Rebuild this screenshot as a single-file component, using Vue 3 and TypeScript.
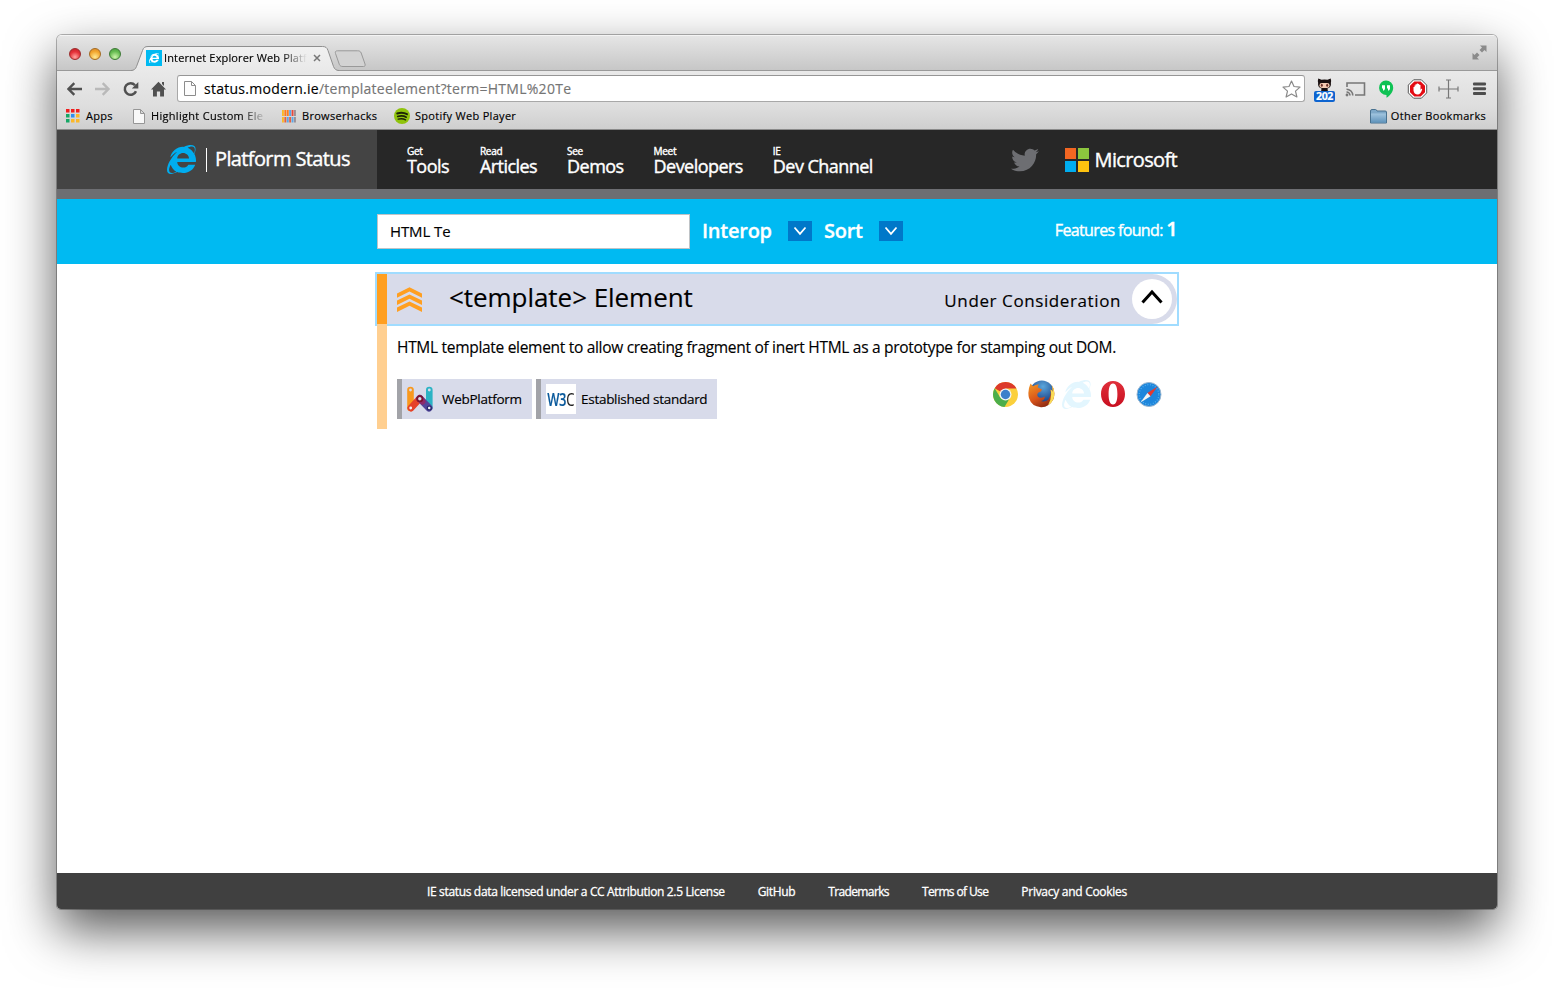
<script setup lang="ts">
import { ref } from 'vue'

interface NavItem {
  lead: string
  label: string
}

const term = ref('HTML Te')

const nav: NavItem[] = [
  { lead: 'Get', label: 'Tools' },
  { lead: 'Read', label: 'Articles' },
  { lead: 'See', label: 'Demos' },
  { lead: 'Meet', label: 'Developers' },
  { lead: 'IE', label: 'Dev Channel' },
]

const footerLinks: string[] = [
  'IE status data licensed under a CC Attribution 2.5 License',
  'GitHub',
  'Trademarks',
  'Terms of Use',
  'Privacy and Cookies',
]

const lights: string[] = ['red', 'amber', 'green']

const appColors: string[] = [
  '#f01d1d', '#f01d1d', '#f01d1d',
  '#16a765', '#2f8df0', '#fbb829',
  '#16a765', '#fbb829', '#fbb829',
]

const hackTop: string[] = ['#fbb829', '#ff7b1c', '#ff7b1c', '#5aa7e8', '#e8483c', '#9a8f96']
const hackBottom: string[] = ['#fbb829', '#e8603c', '#5aa7e8', '#e8603c', '#5aa7e8', '#9a8f96']

const iePath =
  'M483.049 159.706c10.855-24.575 21.424-60.438 21.424-87.871 0-72.722-79.641-98.371-209.673-38.577-107.632-7.181-211.221 73.67-237.098 186.457 30.852-34.862 78.271-82.298 121.977-101.158C125.404 166.85 79.128 228.002 43.992 291.725 23.246 329.651 0 390.94 0 436.747c0 98.575 92.854 86.5 180.251 42.006 31.423 15.43 66.559 15.573 101.695 15.573 97.124 0 184.249-54.294 216.814-146.022H377.927c-52.509 88.593-196.819 52.996-196.819-47.436H509.9c6.407-43.581-1.655-95.715-26.851-141.162zM64.559 346.877c17.711 51.15 53.703 95.871 100.266 123.304-88.741 48.94-173.267 29.096-100.266-123.304zm115.977-108.873c2-55.152 50.276-94.871 103.98-94.871 53.418 0 101.981 39.719 103.981 94.871H180.536zm184.536-187.6c21.425-10.287 48.563-22.003 72.558-22.003 31.422 0 54.274 21.717 54.274 53.722 0 20.003-7.427 49.007-14.569 67.867-26.28-42.292-65.986-81.584-112.263-99.586z'
</script>

<template>
  <div class="desktop">
    <div class="window">
      <!-- Title bar -->
      <div class="titlebar">
        <div class="lights">
          <i v-for="l in lights" :key="l" class="light" :class="l"></i>
        </div>
        <div class="tab">
          <svg class="tab-shape" width="208" height="25" viewBox="0 0 208 25">
            <defs>
              <linearGradient id="tabFill" x1="0" y1="0" x2="0" y2="1">
                <stop offset="0" stop-color="#f1f1f1" />
                <stop offset="1" stop-color="#e9e9e9" />
              </linearGradient>
            </defs>
            <path d="M0 25V24.5C3 24.5 4.500 23 5.500 20.500L11.500 4.500C12.500 1.500 14 .5 17 .5H191.500C194.500 .5 196 1.500 197 4.500L202.500 20.500C203.500 23 205 24.500 208 24.500V25Z" fill="url(#tabFill)" />
            <path d="M0 24.500C3 24.500 4.500 23 5.500 20.500L11.500 4.500C12.500 1.500 14 .5 17 .5H191.500C194.500 .5 196 1.500 197 4.500L202.500 20.500C203.500 23 205 24.500 208 24.500" fill="none" stroke="#8f8f8f" />
          </svg>
          <div class="tab-content">
            <span class="favicon">
              <svg width="10" height="10" viewBox="0 0 512 512"><path :d="iePath" fill="#fff" /></svg>
            </span>
            <span class="tab-title">Internet Explorer Web Platf</span>
            <svg class="tab-close" width="8" height="8" viewBox="0 0 8 8"><path d="M1 1L7 7M7 1L1 7" stroke="#777" stroke-width="1.500" /></svg>
          </div>
        </div>
        <svg class="new-tab" width="34" height="18" viewBox="0 0 34 18">
          <path d="M4.500 .8H24.500C26.500 .8 27.500 1.300 28.200 3L32 14C32.500 15.500 32 16.500 30.500 16.500H10C8 16.500 7 16 6.300 14.300L2.500 3.500C2 1.800 2.500 .8 4.500 .8Z" fill="#d3d3d3" stroke="#999" />
        </svg>
        <svg class="fullscreen" width="15" height="15" viewBox="0 0 15 15" fill="#8b8b8b">
          <path d="M8 .5H14.500V7L12.500 5L10 7.500L7.500 5L10 2.500ZM7 14.500H.5V8L2.500 10L5 7.500L7.500 10L5 12.500Z" />
        </svg>
      </div>

      <!-- Toolbar -->
      <div class="toolbar">
        <div class="nav-buttons">
          <svg width="16" height="16" viewBox="0 0 16 16" fill="none" stroke="#505050" stroke-width="2.400"><path d="M15 8H2M7.300 2.200L1.500 8L7.300 13.800" /></svg>
          <svg width="16" height="16" viewBox="0 0 16 16" fill="none" stroke="#b9b9b9" stroke-width="2.400"><path d="M0 8H13M7.700 2.200L13.500 8L7.700 13.800" /></svg>
          <svg width="16" height="16" viewBox="0 0 16 16"><path d="M13 10.200A5.800 5.800 0 1 1 12 4.200" fill="none" stroke="#505050" stroke-width="2.500" /><path d="M15.300 1V7.500H8.800Z" fill="#505050" /></svg>
          <svg width="16" height="16" viewBox="0 0 16 16" fill="#505050"><path d="M7.500 .8L15 8.600H13V15.500H9.100V10.500H5.900V15.500H2V8.600H0ZM11 1H13V5L11 3Z" /></svg>
        </div>
        <div class="omnibox">
          <svg width="12" height="15" viewBox="0 0 12 15"><path d="M.5 .5H7.500L11.500 4.500V14.500H.5ZM7.500 .5V4.500H11.500" fill="#fdfdfd" stroke="#8c8c8c" /></svg>
          <span class="url"><b>status.modern.ie</b>/templateelement?term=HTML%20Te</span>
          <svg width="19" height="18" viewBox="0 0 19 18"><path d="M9.500 1L12 6.500L18 7.100L13.500 11.100L14.900 17L9.500 13.900L4.100 17L5.500 11.100L1 7.100L7 6.500Z" fill="#fff" stroke="#8a8a8a" stroke-width="1.200" stroke-linejoin="round" /></svg>
        </div>
        <div class="extensions">
          <span class="octocat">
            <svg width="15" height="14" viewBox="0 0 15 14">
              <path d="M1.300 .5L4.500 1.800Q7.500 1.200 10.500 1.800L13.700 .5Q14.500 3 13.900 4.500Q14.500 9.500 10.500 10.500L11 14H4L4.500 10.500Q.5 9.500 1.100 4.500Q.5 3 1.300 .5Z" fill="#191010" />
              <rect x="2.400" y="4.900" width="10.200" height="5" rx="2.400" fill="#f4cbb2" />
              <ellipse cx="4.800" cy="7.300" rx="1" ry="1.500" fill="#6b3026" />
              <ellipse cx="10.200" cy="7.300" rx="1" ry="1.500" fill="#6b3026" />
            </svg>
            <span class="count">202</span>
          </span>
          <svg width="21" height="20" viewBox="0 0 21 20" fill="none" stroke="#777" stroke-width="1.600"><path d="M2 8V4H19.500V16H10" /><path d="M1.500 10.200A6.300 6.300 0 0 1 7.800 16.500M1.500 13A3.500 3.500 0 0 1 5 16.500" /><circle cx="2" cy="16" r=".6" /></svg>
          <svg width="21" height="20" viewBox="0 0 21 20"><path d="M10 1.500A7.200 7.200 0 0 1 17.200 8.700C17.200 13 14 16.500 10.500 18.800V15.900A7.200 7.200 0 1 1 10 1.500Z" fill="#0fc254" /><path d="M6 6.300H9V9.500Q9 11.200 7 11.700V9.400H6ZM11 6.300H14V9.500Q14 11.200 12 11.700V9.400H11Z" fill="#fff" /></svg>
          <svg width="21" height="20" viewBox="0 0 21 20"><path d="M6.600 .8H14.400L19.700 6.100V13.900L14.400 19.200H6.600L1.300 13.900V6.100Z" fill="#fff" stroke="#555" /><path d="M7.300 2.500H13.700L18 6.800V13.200L13.700 17.500H7.300L3 13.200V6.800Z" fill="#e30a12" /><path d="M6.500 8V11.500Q7 15.500 10.800 15.500Q13.500 15.500 15.200 10.500L14.300 9.600L13.500 11V6H12.300V5H11.200V4.500H9.800V5.200H8.500V6.500H7.500V8Z" fill="#fff" /></svg>
          <svg width="21" height="20" viewBox="0 0 21 20" fill="none" stroke="#777" stroke-width="1.200"><path d="M10.500 1V19M1 10H20M8 1H13M8 19H13M1 7.500V12.500M20 7.500V12.500" /></svg>
          <svg width="21" height="20" viewBox="0 0 21 20" fill="#4d4d4d"><rect x="4" y="3.500" width="13" height="3" rx="1" /><rect x="4" y="8.300" width="13" height="3" rx="1" /><rect x="4" y="13.100" width="13" height="3" rx="1" /></svg>
        </div>
      </div>

      <!-- Bookmarks bar -->
      <div class="bookmarks">
        <div class="bookmark apps">
          <svg width="14" height="14" viewBox="0 0 14 14">
            <rect v-for="(c, i) in appColors" :key="i" :x="(i % 3) * 5" :y="Math.floor(i / 3) * 5" width="3.500" height="3.500" :fill="c" />
          </svg>
          <span>Apps</span>
        </div>
        <div class="bookmark highlight">
          <svg width="12" height="15" viewBox="0 0 12 15"><path d="M.5 .5H7.500L11.500 4.500V14.500H.5ZM7.500 .5V4.500H11.500" fill="#f8f8f8" stroke="#969696" /></svg>
          <span class="faded">Highlight Custom Ele</span>
        </div>
        <div class="bookmark hacks">
          <svg width="14" height="13" viewBox="0 0 14 13">
            <rect v-for="(c, i) in hackTop" :key="'t' + i" :x="i * 2.400" y="0" width="1.900" height="6" :fill="c" />
            <rect v-for="(c, i) in hackBottom" :key="'b' + i" :x="i * 2.400" y="7" width="1.900" height="5.500" :fill="c" />
          </svg>
          <span>Browserhacks</span>
        </div>
        <div class="bookmark spotify">
          <svg width="16" height="16" viewBox="0 0 16 16"><circle cx="8" cy="8" r="8" fill="#8fc30c" /><g fill="none" stroke="#1c2406" stroke-linecap="round"><path d="M3.200 5.500Q8.500 3.800 13 6.200" stroke-width="1.900" /><path d="M3.700 8.500Q8.500 7 12.300 9.200" stroke-width="1.600" /><path d="M4.200 11.200Q8.300 10 11.600 11.900" stroke-width="1.300" /></g></svg>
          <span>Spotify Web Player</span>
        </div>
        <div class="bookmark other">
          <svg width="17" height="15" viewBox="0 0 17 15">
            <defs><linearGradient id="folder" x1="0" y1="0" x2="0" y2="1"><stop offset="0" stop-color="#a3c6e0" /><stop offset="1" stop-color="#5f93bb" /></linearGradient></defs>
            <path d="M.5 2Q.5 .5 2 .5H5.500Q6.500 .5 7 2H15Q16.500 2 16.500 3V14H.5Z" fill="#7fa9c9" stroke="#48718f" />
            <path d="M1 4.500H16V13.500H1Z" fill="url(#folder)" />
          </svg>
          <span>Other Bookmarks</span>
        </div>
      </div>

      <!-- Site -->
      <div class="page">
        <header class="site-header">
          <div class="brand">
            <svg width="29" height="29" viewBox="0 0 512 512"><path :d="iePath" fill="#00adef" /></svg>
            <span class="divider"></span>
            <span class="brand-name">Platform Status</span>
          </div>
          <nav class="menu">
            <a v-for="item in nav" :key="item.label" class="menu-item">
              <small>{{ item.lead }}</small>
              <span>{{ item.label }}</span>
            </a>
          </nav>
          <div class="social">
            <svg width="28" height="28" viewBox="0 0 512 512"><path fill="#6d6e72" d="M459.370 151.716c.325 4.548.325 9.097.325 13.645 0 138.720-105.583 298.558-298.558 298.558-59.452 0-114.680-17.219-161.137-47.106 8.447.974 16.568 1.299 25.340 1.299 49.055 0 94.213-16.568 130.274-44.832-46.132-.975-84.792-31.188-98.112-72.772 6.498.974 12.995 1.624 19.818 1.624 9.421 0 18.843-1.300 27.614-3.573-48.081-9.747-84.143-51.980-84.143-102.985v-1.299c13.969 7.797 30.214 12.670 47.431 13.319-28.264-18.843-46.781-51.005-46.781-87.391 0-19.492 5.197-37.360 14.294-52.954 51.655 63.675 129.300 105.258 216.365 109.807-1.624-7.797-2.599-15.918-2.599-24.040 0-57.828 46.782-104.934 104.934-104.934 30.213 0 57.502 12.670 76.670 33.137 23.715-4.548 46.456-13.320 66.599-25.340-7.798 24.366-24.366 44.833-46.132 57.827 21.117-2.273 41.584-8.122 60.426-16.243-14.292 20.791-32.161 39.308-52.628 54.253z" /></svg>
            <div class="ms">
              <svg width="24" height="24" viewBox="0 0 24 24"><path fill="#f26622" d="M0 0h11v11H0z" /><path fill="#8cc63e" d="M13 0h11v11H13z" /><path fill="#00adef" d="M0 13h11v11H0z" /><path fill="#fdc20f" d="M13 13h11v11H13z" /></svg>
              <span>Microsoft</span>
            </div>
          </div>
        </header>

        <div class="filters">
          <input v-model="term" class="search" type="text" />
          <span class="filter-label interop">Interop</span>
          <button class="drop" type="button"><svg width="14" height="10" viewBox="0 0 14 10"><path d="M1.500 1.500L7 7.800L12.500 1.500" fill="none" stroke="#fff" stroke-width="1.800" /></svg></button>
          <span class="filter-label sort">Sort</span>
          <button class="drop" type="button"><svg width="14" height="10" viewBox="0 0 14 10"><path d="M1.500 1.500L7 7.800L12.500 1.500" fill="none" stroke="#fff" stroke-width="1.800" /></svg></button>
          <span class="found">Features found: <b>1</b></span>
        </div>

        <main class="results">
          <article class="feature">
            <div class="feature-focus">
              <div class="feature-head">
                <svg width="25" height="25" viewBox="0 0 25 25" fill="#ff9f21"><path d="M0 6.500L12.500 .3L25 6.500V10.800L12.500 4.600L0 10.800Z" /><path d="M0 13.600L12.500 7.400L25 13.600V17.900L12.500 11.700L0 17.900Z" /><path d="M0 20.600L12.500 14.400L25 20.600V24.900L12.500 18.700L0 24.900Z" /></svg>
                <h2>&lt;template&gt; Element</h2>
                <span class="status">Under Consideration</span>
                <span class="toggle"><svg width="24" height="16" viewBox="0 0 24 16"><path d="M2.500 13.500L12 3L21.500 13.500" fill="none" stroke="#000" stroke-width="3" /></svg></span>
              </div>
            </div>
            <div class="feature-body">
              <p>HTML template element to allow creating fragment of inert HTML as a prototype for stamping out DOM.</p>
              <div class="feature-row">
                <div class="tags">
                  <span class="tag webplatform">
                    <svg width="26" height="26" viewBox="0 0 26 26" fill="none" stroke-linecap="round">
                      <path d="M3.500 22L3.500 4" stroke="#f8981d" stroke-width="6.600" />
                      <path d="M22.300 4V21" stroke="#2bb3c4" stroke-width="6.600" />
                      <path d="M4 22L12.700 12.500" stroke="#e5412a" stroke-width="7" />
                      <path d="M22 22L12.900 12.500" stroke="#52459a" stroke-width="7" />
                      <path d="M12.800 12.500L15.500 15.500" stroke="#8e2a6b" stroke-width="6" />
                      <circle cx="12.800" cy="12.800" r="2.600" stroke="#7c1230" stroke-width="1.800" fill="#d8dbea" />
                      <path d="M3.500 4h.01M22.300 4h.01" stroke="#d8dbea" stroke-width="2.800" />
                      <path d="M3.700 22h.01M22.300 22h.01" stroke="#f3f1f6" stroke-width="2.800" />
                      <circle cx="22.300" cy="22" r="2" stroke="#252a6b" stroke-width="1.200" />
                    </svg>
                    <span>WebPlatform</span>
                  </span>
                  <span class="tag w3c">
                    <span class="w3c-box"><span class="w3c-logo"><b>W3</b><em>C</em></span></span>
                    <span>Established standard</span>
                  </span>
                </div>
                <div class="browsers">
                  <svg width="28" height="28" viewBox="0 0 28 28">
                    <circle cx="14.500" cy="14.500" r="12.500" fill="#fbd03c" />
                    <path d="M14.500 14.500L3.700 8.200A12.500 12.500 0 0 1 25.500 8.500H14.500Z" fill="#dc3a2b" />
                    <path d="M3.700 8.200A12.500 12.500 0 0 0 13.500 27L19.300 17.300L14.500 14.500L9.200 17.500Z" fill="#4cae4a" />
                    <circle cx="14.500" cy="14.500" r="6" fill="#f4f4f4" /><circle cx="14.500" cy="14.500" r="4.700" fill="#3d7fcb" />
                  </svg>
                  <svg width="28" height="28" viewBox="0 0 28 28">
                    <defs>
                      <radialGradient id="globe" cx=".55" cy=".25" r=".7"><stop offset="0" stop-color="#5aa6dc" /><stop offset="1" stop-color="#173a80" /></radialGradient>
                      <linearGradient id="fox" x1="0" y1="0" x2=".6" y2="1"><stop offset="0" stop-color="#f39a25" /><stop offset=".6" stop-color="#d9541a" /><stop offset="1" stop-color="#8e2a12" /></linearGradient>
                    </defs>
                    <circle cx="14.800" cy="12.500" r="12" fill="url(#globe)" />
                    <path d="M24.500 4.500Q29 11 26.500 19Q22 27.500 14 27.200Q4.500 26.500 2 18Q.2 11 3.500 3.500L6 6.200Q9 4 12 4.500Q10.500 6 11 7.500L15 9.500Q14.500 11.800 11.500 12.500Q9.500 14 10.800 16.500Q13 19 18 16.500Q17.500 20.500 14 21Q18 22.500 21.500 19.500Q24.500 16 23.500 9.500Q25.500 10 25.500 12Q26 8 24.500 4.500Z" fill="url(#fox)" />
                    <path d="M24.500 4.500Q29 11 26.500 19Q24.500 23.500 21 25.300Q25.500 17 23.500 9.500Q25.500 10 25.500 12Q26 8 24.500 4.500Z" fill="#fbdc55" />
                  </svg>
                  <svg width="29" height="29" viewBox="0 0 512 512"><path :d="iePath" fill="#e3f6fe" /></svg>
                  <svg width="28" height="28" viewBox="0 0 28 28">
                    <defs><linearGradient id="opera" x1="0" y1="0" x2="0" y2="1"><stop offset="0" stop-color="#e0303b" /><stop offset="1" stop-color="#c80f20" /></linearGradient></defs>
                    <path fill-rule="evenodd" d="M14 1C21 1 26 6.500 26 14S21 27 14 27S2 21.500 2 14S7 1 14 1ZM14 3.500C10.800 3.500 9.600 8 9.600 14S10.800 24.500 14 24.500S18.400 20 18.400 14S17.200 3.500 14 3.500Z" fill="url(#opera)" />
                  </svg>
                  <svg width="28" height="28" viewBox="0 0 28 28">
                    <circle cx="14" cy="14.500" r="12" fill="#1d86dc" stroke="#9ab6cf" stroke-width="1" />
                    <circle cx="14" cy="14.500" r="9.800" fill="none" stroke="#57b2ee" stroke-width="1.200" stroke-dasharray="1 1.600" />
                    <path d="M22.500 6.500L15.500 16.200L12.400 13Z" fill="#e5382f" /><path d="M5.500 22.500L12.400 13L15.500 16.200Z" fill="#f4f4f4" />
                  </svg>
                </div>
              </div>
            </div>
          </article>
        </main>

        <footer class="site-footer">
          <a v-for="link in footerLinks" :key="link">{{ link }}</a>
        </footer>
      </div>
    </div>
  </div>
</template>

<style>
body {
  margin: 0;
  background: #fff;
}
</style>

<style scoped>
* {
  box-sizing: border-box;
}
svg {
  display: block;
  flex: none;
}
.desktop {
  width: 1554px;
  height: 988px;
  padding: 35px 57px 0;
  overflow: hidden;
  font-family: 'Open Sans', 'Noto Sans', sans-serif;
  color: #000;
  -webkit-text-stroke: 0.15px currentColor;
}
.window {
  display: flex;
  flex-direction: column;
  width: 1440px;
  height: 874px;
  border-radius: 5px 5px 4px 4px;
  overflow: hidden;
  box-shadow: 0 0 0 1px rgba(0, 0, 0, 0.28), 0 21px 50px rgba(0, 0, 0, 0.66);
}

/* Browser chrome */
.titlebar {
  display: flex;
  align-items: flex-start;
  height: 36px;
  padding-left: 12px;
  background: linear-gradient(#e6e6e6, #c6c6c6);
  box-shadow: inset 0 1px 0 #f4f4f4, inset 0 -1px 0 #999;
}
.lights {
  display: flex;
  gap: 8px;
  padding-top: 13px;
  width: 62px;
}
.light {
  width: 12px;
  height: 12px;
  border-radius: 50%;
  border: 1px solid;
}
.red {
  background: radial-gradient(circle at 50% 80%, #ff9c98 5%, #e5333a 55%, #c01c25);
  border-color: #9c2c2c;
}
.amber {
  background: radial-gradient(circle at 50% 80%, #ffe48a 5%, #f2a52d 60%, #d7852a);
  border-color: #a46b21;
}
.green {
  background: radial-gradient(circle at 50% 80%, #c5f1a4 5%, #65bb50 60%, #459a3f);
  border-color: #3d7a35;
}
.tab {
  display: grid;
  width: 208px;
  height: 25px;
  margin-top: 11px;
}
.tab-shape,
.tab-content {
  grid-area: 1 / 1;
}
.tab-content {
  display: flex;
  align-items: center;
  height: 24px;
  padding-left: 15px;
}
.favicon {
  display: grid;
  place-items: center;
  width: 16px;
  height: 16px;
  margin-right: 2px;
  background: #00baf2;
}
.tab-title {
  width: 143px;
  overflow: hidden;
  white-space: nowrap;
  font-size: 11px;
  line-height: 16px;
  letter-spacing: 0.14px;
  -webkit-mask-image: linear-gradient(90deg, #000 82%, transparent 100%);
  mask-image: linear-gradient(90deg, #000 82%, transparent 100%);
}
.tab-close {
  margin-left: 6px;
}
.new-tab {
  margin: 15px 0 0 -6px;
}
.fullscreen {
  margin: 10px 10px 0 auto;
}
.toolbar {
  display: flex;
  align-items: center;
  height: 35px;
  padding: 0 7px 0 10px;
  background: linear-gradient(#e9e9e9, #dedede);
}
.nav-buttons {
  display: flex;
  gap: 12px;
  margin-right: 10px;
}
.omnibox {
  flex: 1;
  display: flex;
  align-items: center;
  height: 27px;
  padding: 0 3px 0 6px;
  border: 1px solid #a8a8a8;
  border-top-color: #969696;
  border-radius: 3px;
  background: #fff;
}
.url {
  flex: 1;
  margin-left: 8px;
  font-size: 14px;
  line-height: 20px;
  letter-spacing: 0.27px;
  color: #757575;
}
.url b {
  font-weight: 400;
  color: #000;
}
.extensions {
  display: flex;
  align-items: center;
  gap: 10px;
  margin-left: 9px;
}
.octocat {
  display: flex;
  flex-direction: column;
  align-items: center;
  width: 21px;
  height: 24px;
  margin-top: 3px;
}
.count {
  width: 21px;
  height: 11px;
  margin-top: -1px;
  border-radius: 2px;
  background: #0d64d0;
  color: #fff;
  font-size: 10.500px;
  font-weight: 700;
  line-height: 11px;
  letter-spacing: -0.3px;
  text-align: center;
}
.bookmarks {
  display: flex;
  align-items: center;
  height: 24px;
  padding: 0 11px 3px 9px;
  background: linear-gradient(#dedede, #cfcfcf);
  border-bottom: 1px solid #8b8b8b;
}
.bookmark {
  display: flex;
  align-items: center;
  font-size: 11px;
  line-height: 16px;
  letter-spacing: 0.3px;
  white-space: nowrap;
}
.apps {
  gap: 6px;
  width: 67px;
}
.highlight {
  gap: 6px;
  width: 149px;
}
.faded {
  width: 118px;
  overflow: hidden;
  -webkit-mask-image: linear-gradient(90deg, #000 76%, transparent 98%);
  mask-image: linear-gradient(90deg, #000 76%, transparent 98%);
}
.hacks {
  gap: 6px;
  width: 112px;
}
.spotify {
  gap: 5px;
}
.other {
  gap: 4px;
  margin-left: auto;
}

/* Page */
.page {
  flex: 1;
  display: flex;
  flex-direction: column;
  background: #fff;
}
.site-header {
  display: flex;
  height: 69px;
  border-bottom: 10px solid #6d6e72;
  background: #272727;
  color: #fff;
  -webkit-text-stroke: 0.4px currentColor;
}
.brand {
  display: flex;
  align-items: center;
  width: 320px;
  padding: 0 0 1px 110px;
  background: #444;
}
.divider {
  width: 1px;
  height: 24px;
  margin: 2px 8px 0 10px;
  background: #fff;
}
.brand-name {
  font-size: 20px;
  line-height: 26px;
  letter-spacing: -0.62px;
}
.menu {
  display: flex;
  gap: 30px;
  padding: 14px 0 0 30px;
}
.menu-item {
  display: flex;
  flex-direction: column;
  white-space: nowrap;
}
.menu-item:first-child {
  margin-right: 1px;
}
.menu-item small {
  font-size: 10px;
  line-height: 14px;
  letter-spacing: -0.3px;
}
.menu-item span {
  font-size: 18px;
  line-height: 16px;
  letter-spacing: -0.55px;
}
.social {
  display: flex;
  align-items: center;
  margin-left: auto;
  padding-right: 320px;
  gap: 26px;
}
.ms {
  display: flex;
  align-items: center;
  gap: 6px;
  padding-top: 1px;
  font-size: 20px;
  line-height: 24px;
  letter-spacing: -0.65px;
}
.filters {
  display: flex;
  align-items: center;
  height: 65px;
  padding: 0 320px;
  background: #00baf2;
  color: #fff;
}
.search {
  width: 313px;
  height: 35px;
  margin: 0 12px 0 0;
  padding: 0 12px 1px;
  border: 1px solid #bfc3c6;
  border-radius: 0;
  outline: none;
  background: #fff;
  color: #000;
  font-family: inherit;
  font-size: 15px;
  letter-spacing: -0.1px;
}
.filter-label {
  margin-top: -3px;
  font-size: 20px;
  font-weight: 600;
  letter-spacing: -0.25px;
  -webkit-text-stroke: 0.3px currentColor;
}
.interop {
  width: 86px;
}
.sort {
  width: 55px;
  margin-left: 12px;
}
.drop {
  display: grid;
  place-items: center;
  width: 24px;
  height: 20px;
  margin: -1px 0 0;
  padding: 0;
  border: 0;
  background: #0078c9;
}
.found {
  margin: -6px 0 0 auto;
  font-size: 16px;
  letter-spacing: -0.65px;
  white-space: nowrap;
  -webkit-text-stroke: 0.4px currentColor;
}
.found b {
  font-size: 20px;
  font-weight: 600;
}
.results {
  flex: 1;
  padding: 10px 320px 0;
}
.feature {
  display: flex;
  flex-direction: column;
}
.feature-focus {
  outline: 2px solid #a0dcff;
}
.feature-head {
  display: flex;
  align-items: center;
  height: 50px;
  padding: 0 5px 0 10px;
  border-left: 10px solid #ff9f21;
  border-radius: 0 25px 25px 0;
  background: #d8dbea;
}
.feature-head h2 {
  margin: -4px 0 0 27px;
  font-size: 26px;
  font-weight: 400;
  line-height: 36px;
  letter-spacing: -0.05px;
}
.status {
  margin: 3px 11px 0 auto;
  font-size: 17px;
  line-height: 24px;
  letter-spacing: 0.6px;
}
.toggle {
  display: grid;
  place-items: center;
  width: 40px;
  height: 40px;
  padding-bottom: 4px;
  border-radius: 50%;
  background: #fff;
}
.feature-body {
  height: 105px;
  padding: 13px 0 0 10px;
  border-left: 10px solid #ffcf90;
}
.feature-body p {
  margin: 0;
  font-size: 15.500px;
  line-height: 20px;
  letter-spacing: -0.3px;
  white-space: nowrap;
}
.feature-row {
  display: flex;
  justify-content: space-between;
  margin-top: 22px;
}
.tags {
  display: flex;
  gap: 4px;
}
.tag {
  display: flex;
  align-items: center;
  height: 40px;
  padding-left: 5px;
  border-left: 5px solid #a2a3a8;
  background: #d8dbea;
  font-size: 13.500px;
  letter-spacing: -0.28px;
  white-space: nowrap;
}
.webplatform {
  gap: 9px;
  width: 135px;
}
.w3c {
  gap: 5px;
  width: 181px;
}
.w3c-box {
  display: flex;
  align-items: center;
  justify-content: center;
  width: 30px;
  height: 30px;
  background: #fff;
}
.w3c-logo {
  flex: none;
  font-size: 18px;
  line-height: 30px;
  letter-spacing: -0.5px;
  transform: scaleX(0.72);
}
.w3c-logo b {
  color: #0b5a9c;
  font-weight: 600;
}
.w3c-logo em {
  font-style: normal;
  color: #222;
}
.browsers {
  display: flex;
  gap: 8px;
  padding: 1px 14px 0 0;
}
.browsers svg:nth-child(3) {
  margin-left: -1px;
}
.site-footer {
  display: flex;
  justify-content: center;
  align-items: center;
  gap: 33px;
  height: 36px;
  background: #404040;
  color: #fff;
  font-size: 12px;
  letter-spacing: -0.34px;
  white-space: nowrap;
  -webkit-text-stroke: 0.3px currentColor;
}
.site-footer a:nth-child(3),
.site-footer a:nth-child(4) {
  letter-spacing: -0.62px;
}
.site-footer a:last-child {
  letter-spacing: -0.28px;
}
</style>
